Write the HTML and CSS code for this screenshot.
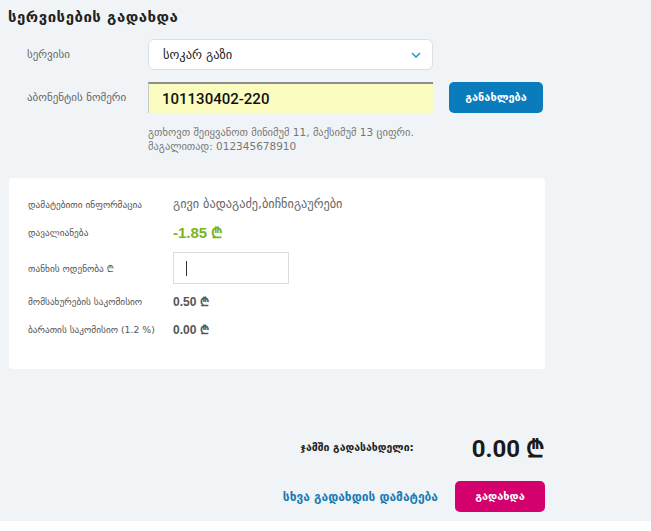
FILE: index.html
```html
<!DOCTYPE html>
<html lang="ka">
<head>
<meta charset="utf-8">
<link rel="stylesheet" href="styles.css">
</head>
<body>
<div class="page">
  <h1 class="title">სერვისების გადახდა</h1>

  <div class="form">
    <div class="form-row">
      <div class="form-label">სერვისი</div>
      <div class="select">
        <span>სოკარ გაზი</span>
        <svg class="chev" width="10" height="6" viewBox="0 0 10 6"><path d="M1 1l4 4 4-4" fill="none" stroke="#2a9bd8" stroke-width="1.6"/></svg>
      </div>
    </div>
    <div class="form-row">
      <div class="form-label">აბონენტის ნომერი</div>
      <div class="num-input">101130402-220</div>
      <button class="btn btn-blue">განახლება</button>
    </div>
    <div class="hint">გთხოვთ შეიყვანოთ მინიმუმ 11, მაქსიმუმ 13 ციფრი.<br>მაგალითად: 012345678910</div>
  </div>

  <div class="card">
    <div class="info-row">
      <div class="info-label">დამატებითი ინფორმაცია</div>
      <div class="info-val name">გივი ბადაგაძე,ბიჩნიგაურები</div>
    </div>
    <div class="info-row">
      <div class="info-label">დავალიანება</div>
      <div class="info-val debt">-1.85 ₾</div>
    </div>
    <div class="info-row amount-row">
      <div class="info-label">თანხის ოდენობა ₾</div>
      <div class="amount-box"><span class="caret"></span></div>
    </div>
    <div class="info-row">
      <div class="info-label">მომსახურების საკომისიო</div>
      <div class="info-val fee">0.50 ₾</div>
    </div>
    <div class="info-row">
      <div class="info-label">ბარათის საკომისიო (1.2 %)</div>
      <div class="info-val fee">0.00 ₾</div>
    </div>
  </div>

  <div class="summary">
    <div class="total">
      <span class="total-label">ჯამში გადასახდელი:</span>
      <span class="total-val">0.00 ₾</span>
    </div>
    <div class="actions">
      <a class="add-link">სხვა გადახდის დამატება</a>
      <button class="btn btn-pink">გადახდა</button>
    </div>
  </div>
</div>
</body>
</html>
```

FILE: styles.css
```css
html, body {
  margin: 0;
  padding: 0;
  background: #fff;
  font-family: "DejaVu Sans", "Noto Sans", sans-serif;
}
.page {
  background: #f1f4f6;
  height: 521px;
  padding: 8px 0 0 8px;
  box-sizing: border-box;
}
.title {
  margin: 0;
  font-size: 15px;
  font-weight: bold;
  color: #222;
  line-height: 18px;
  letter-spacing: 0.5px;
}
.form {
  margin-top: 13px;
  padding-left: 19px;
}
.form-row {
  display: flex;
  align-items: center;
  margin-bottom: 12px;
}
.form-label {
  width: 121px;
  font-size: 11px;
  color: #666;
}
.select {
  width: 285px;
  height: 31px;
  box-sizing: border-box;
  background: #fff;
  border: 1px solid #dcdfe2;
  border-radius: 6px;
  display: flex;
  align-items: center;
  justify-content: space-between;
  padding: 0 11px 0 14px;
  font-size: 12.5px;
  color: #222;
}
.num-input {
  width: 285px;
  height: 31px;
  box-sizing: border-box;
  background: #fbfdc0;
  border-top: 2px solid #8e8e8e;
  border-left: 1px solid #c8c8c8;
  display: flex;
  align-items: center;
  padding-left: 13px;
  font-family: "Roboto", sans-serif;
  font-weight: 500;
  font-size: 15px;
  color: #111;
}
.btn {
  border: none;
  color: #fff;
  font-family: "DejaVu Sans", sans-serif;
  font-weight: bold;
  font-size: 11px;
  border-radius: 5px;
  height: 31px;
  cursor: pointer;
}
.btn-blue {
  margin-left: 16px;
  width: 94px;
  background: #0a7cbc;
}
.hint {
  margin-left: 121px;
  margin-top: 0;
  font-size: 10.5px;
  line-height: 14px;
  color: #777;
}
.card {
  margin-top: 25px;
  width: 536px;
  margin-left: 1px;
  background: #fff;
  border-radius: 3px;
  padding: 12px 0 0 19px;
  box-sizing: border-box;
  height: 191px;
}
.info-row {
  display: flex;
  align-items: center;
  height: 28px;
}
.info-label {
  width: 145px;
  font-size: 9.3px;
  color: #555;
}
.info-val {
  color: #555;
}
.name {
  font-size: 12.3px;
  color: #666;
}
.debt {
  font-family: "Liberation Sans", sans-serif;
  font-weight: bold;
  font-size: 15px;
  color: #7cb518;
}
.fee {
  font-family: "Liberation Sans", sans-serif;
  font-weight: bold;
  font-size: 12px;
  color: #555;
}
.amount-row {
  height: 32px;
  margin: 6px 0 3px;
}
.amount-box {
  width: 116px;
  height: 32px;
  box-sizing: border-box;
  border: 1px solid #dcdcdc;
  padding-left: 12px;
  display: flex;
  align-items: center;
}
.caret {
  width: 1px;
  height: 15px;
  background: #333;
}
.summary {
  width: 537px;
  margin-top: 63px;
  display: flex;
  flex-direction: column;
  align-items: flex-end;
}
.total {
  display: flex;
  align-items: center;
  height: 30px;
}
.total-label {
  font-size: 10.5px;
  font-weight: bold;
  color: #222;
  margin-right: 58px;
}
.total-val {
  font-family: "Roboto", sans-serif;
  font-weight: bold;
  font-size: 24px;
  color: #1a1a1a;
}
.actions {
  margin-top: 19px;
  display: flex;
  align-items: center;
}
.add-link {
  font-size: 12px;
  font-weight: bold;
  color: #1b7ab5;
  margin-right: 17px;
}
.btn-pink {
  width: 90px;
  background: #d3006d;
}
```
